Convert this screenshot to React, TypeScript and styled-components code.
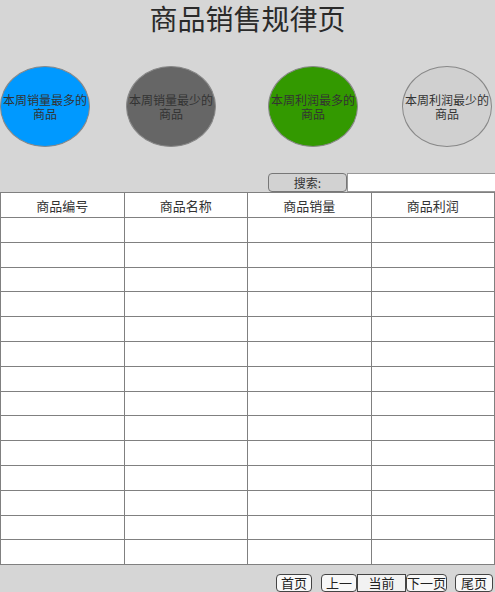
import React from "react";
import styled, { createGlobalStyle } from "styled-components";

const Global = createGlobalStyle`
  html, body { margin: 0; padding: 0; background: #d6d6d6; }
  body { font-family: "Noto Sans CJK SC", "Noto Sans", sans-serif; color: #333; }
`;

const Page = styled.div`
  width: 495px;
  height: 592px;
  display: flex;
  flex-direction: column;
  overflow: hidden;
`;

const Title = styled.h1`
  margin: 0;
  height: 36px;
  font-family: "Noto Sans CJK SC", serif;
  font-weight: 400;
  font-size: 28px;
  line-height: 36px;
  text-align: center;
  color: #2a2a2a;
`;

const CircleRow = styled.div`
  display: flex;
  margin-top: 30px;
  height: 81px;
`;

const Circle = styled.div<{ $bg: string; $ml: number }>`
  width: 90px;
  height: 81px;
  box-sizing: border-box;
  margin-left: ${(p) => p.$ml}px;
  border-radius: 50%;
  border: 1px solid #888;
  background: ${(p) => p.$bg};
  display: flex;
  align-items: center;
  justify-content: center;
  text-align: center;
  font-size: 12px;
  line-height: 14px;
  color: #333;
`;

const SearchRow = styled.div`
  display: flex;
  justify-content: flex-end;
  margin-top: 26px;
  height: 19px;
`;

const SearchButton = styled.button`
  width: 79px;
  height: 19px;
  box-sizing: border-box;
  border: 1px solid #777;
  border-radius: 4px;
  background: #d2d2d2;
  font-family: "Noto Sans CJK SC", sans-serif;
  font-size: 12px;
  line-height: 17px;
  padding: 0;
  color: #333;
`;

const SearchInput = styled.input`
  width: 148px;
  height: 19px;
  box-sizing: border-box;
  border: 1px solid #999;
  border-right: none;
  background: #fff;
  padding: 0 4px;
  outline: none;
`;

const Table = styled.table`
  width: 495px;
  border-collapse: collapse;
  background: #fff;
  table-layout: fixed;
`;

const Th = styled.th`
  border: 1px solid #808080;
  height: 24px;
  padding: 0;
  font-weight: 400;
  font-size: 13px;
  color: #333;
  text-align: center;
`;

const Td = styled.td`
  border: 1px solid #808080;
  height: 23.8px;
  padding: 0;
`;

const Pager = styled.div`
  display: flex;
  justify-content: flex-end;
  align-items: center;
  margin-top: 9px;
  padding-right: 2px;
  height: 18px;
`;

const PageButton = styled.button<{ $ml?: number; $w: number; $flat?: boolean }>`
  width: ${(p) => p.$w}px;
  height: 18px;
  box-sizing: border-box;
  margin-left: ${(p) => p.$ml ?? 0}px;
  padding: 0;
  border: 1px solid #444;
  border-radius: ${(p) => (p.$flat ? "0" : "4px")};
  background: ${(p) => (p.$flat ? "#f2f2f2" : "#f8f8f8")};
  font-family: "Noto Sans CJK SC", sans-serif;
  font-size: 13px;
  line-height: 16px;
  color: #222;
`;

const circles = [
  { bg: "#0099ff", ml: 0, text: "本周销量最多的商品" },
  { bg: "#666666", ml: 36, text: "本周销量最少的商品" },
  { bg: "#339900", ml: 52, text: "本周利润最多的商品" },
  { bg: "#d0d0d0", ml: 44, text: "本周利润最少的商品" },
];

const headers = ["商品编号", "商品名称", "商品销量", "商品利润"];
const rows = Array.from({ length: 14 }, (_, i) => i);

export default function App() {
  return (
    <Page>
      <Global />
      <Title>商品销售规律页</Title>
      <CircleRow>
        {circles.map((c) => (
          <Circle key={c.text} $bg={c.bg} $ml={c.ml}>
            <span>
              {c.text.slice(0, 7)}
              <br />
              {c.text.slice(7)}
            </span>
          </Circle>
        ))}
      </CircleRow>
      <SearchRow>
        <SearchButton>搜索:</SearchButton>
        <SearchInput />
      </SearchRow>
      <Table>
        <thead>
          <tr>
            {headers.map((h) => (
              <Th key={h}>{h}</Th>
            ))}
          </tr>
        </thead>
        <tbody>
          {rows.map((r) => (
            <tr key={r}>
              {headers.map((h) => (
                <Td key={h} />
              ))}
            </tr>
          ))}
        </tbody>
      </Table>
      <Pager>
        <PageButton $w={36}>首页</PageButton>
        <PageButton $w={36} $ml={9}>上一</PageButton>
        <PageButton $w={49} $flat>当前</PageButton>
        <PageButton $w={41}>下一页</PageButton>
        <PageButton $w={38} $ml={8}>尾页</PageButton>
      </Pager>
    </Page>
  );
}
